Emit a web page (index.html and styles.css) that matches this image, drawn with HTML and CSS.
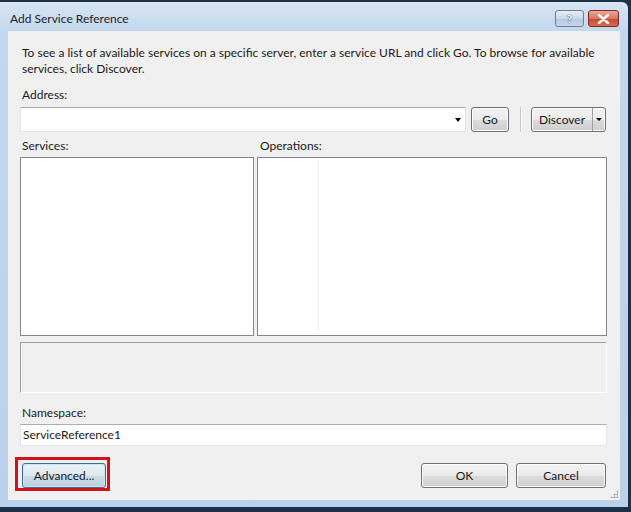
FILE: index.html
```html
<!DOCTYPE html>
<html lang="en">
<head>
  <meta charset="UTF-8">
  <title>Add Service Reference</title>
  <link rel="stylesheet" href="styles.css">
</head>
<body>
  <div class="window">
    <div class="titlebar">
      <span class="title">Add Service Reference</span>
      <div class="caption-buttons">
        <span class="cap-btn help">?</span>
        <span class="cap-btn close">
          <svg width="13" height="10" viewBox="0 0 13 10"><path d="M2 1 L11 9 M11 1 L2 9" stroke="#fff" stroke-width="2.4" stroke-linecap="round"/></svg>
        </span>
      </div>
    </div>

    <div class="client">
      <p class="intro">To see a list of available services on a specific server, enter a service URL and click Go. To browse for available services, click Discover.</p>

      <div class="label">Address:</div>
      <div class="address-row">
        <div class="combo"><span class="combo-arrow"></span></div>
        <button class="btn go">Go</button>
        <span class="separator"></span>
        <div class="split">
          <span class="split-main">Discover</span>
          <span class="split-arrow"></span>
        </div>
      </div>

      <div class="lists-labels">
        <div class="label">Services:</div>
        <div class="label ops-label">Operations:</div>
      </div>
      <div class="lists">
        <div class="listbox"></div>
        <div class="listbox operations"><div class="ops-col"></div></div>
      </div>

      <div class="details"></div>

      <div class="label namespace-label">Namespace:</div>
      <div class="textbox">ServiceReference1</div>

      <div class="button-row">
        <div class="highlight"><button class="btn advanced">Advanced...</button></div>
        <button class="btn ok">OK</button>
        <button class="btn cancel">Cancel</button>
      </div>

      <span class="grip"></span>
    </div>
  </div>
</body>
</html>
```

FILE: styles.css
```css
body { margin: 0; background: #1d3047; font-family: Lato, "Liberation Sans", sans-serif; font-size: 12px; color: #1a1a1a; }

.window { width: 628px; height: 505px; margin-top: 2px; display: flex; flex-direction: column; background: linear-gradient(#d7e5f4, #c3d8ee 30px, #b9d1ea); border-radius: 0 6px 0 0; }

.titlebar { height: 29px; display: flex; align-items: flex-start; padding: 0 9px 0 10px; }
.title { margin-top: 9px; line-height: 16px; color: #1e1e1e; }
.caption-buttons { margin-left: auto; margin-top: 8px; display: flex; gap: 4px; }
.cap-btn { height: 15px; border: 1px solid #6d7f96; border-radius: 3px; display: flex; align-items: center; justify-content: center; }
.help { width: 27px; background: linear-gradient(#e6eef8, #c9d8ea 50%, #b4c8e0 51%, #c7d8ec); color: #fff; font-weight: bold; text-shadow: 0 0 1px #2d4a6e, 0 0 1px #2d4a6e; }
.close { width: 29px; border-color: #7a2a22; background: linear-gradient(#e9a99c, #d7755f 50%, #c44a30 51%, #d86c4f); }

.client { flex: 1; margin: 0 8px 7px 8px; padding: 14px 13px 12px 12px; background: #f0f0f0; position: relative; }

.intro { margin: 0 0 0 2px; line-height: 16px; }
.label { line-height: 16px; padding-left: 2px; }
.intro + .label { margin-top: 10px; }

.address-row { margin-top: 4px; height: 25px; display: flex; align-items: stretch; }
.combo { flex: 1; margin-right: 5px; background: #fff; border: 1px solid #e2e3ea; border-top-color: #abadb3; border-bottom-color: #e3e9ef; position: relative; }
.combo-arrow { position: absolute; right: 4px; top: 10px; border: 3.5px solid transparent; border-top: 4px solid #000; border-bottom: 0; }

.btn { font: inherit; color: #1a1a1a; padding: 0; border: 1px solid #707070; border-radius: 3px; box-shadow: inset 0 0 0 1px #fcfcfc; background: linear-gradient(#f2f2f2, #ebebeb 50%, #dddddd 51%, #cfcfcf); }
.go { width: 38px; height: 25px; }
.separator { width: 1px; margin: 0 9px 0 11px; background: #c8c8c8; border-right: 1px solid #fff; }
.split { width: 73px; margin-right: 1px; display: flex; border: 1px solid #707070; border-radius: 3px; box-shadow: inset 0 0 0 1px #fcfcfc; background: linear-gradient(#f2f2f2, #ebebeb 50%, #dddddd 51%, #cfcfcf); }
.split-main { flex: 1; display: flex; align-items: center; justify-content: center; }
.split-arrow { width: 12px; border-left: 1px solid #a0a0a0; position: relative; }
.split-arrow::after { content: ""; position: absolute; left: 3px; top: 10px; border: 3px solid transparent; border-top: 3px solid #000; border-bottom: 0; }

.lists-labels { margin-top: 6px; display: grid; grid-template-columns: 234px 1fr; gap: 3px; }
.ops-label { padding-left: 3px; }
.lists { margin-top: 3px; height: 179px; display: grid; grid-template-columns: 234px 1fr; gap: 3px; }
.listbox { background: #fff; border: 1px solid #828790; }
.operations { display: flex; padding: 2px 0; }
.ops-col { width: 60px; border-right: 1px solid #f0f0f0; }

.details { margin-top: 6px; height: 49px; border: 1px solid #a0a0a0; border-right-color: #fff; border-bottom-color: #fff; background: #f0f0f0; }

.namespace-label { margin-top: 12px; }
.textbox { margin-top: 3px; height: 20px; line-height: 20px; padding-left: 2px; background: #fff; border: 1px solid #e2e3ea; border-top-color: #abadb3; border-bottom-color: #e3e9ef; }

.button-row { margin-top: 17px; height: 25px; display: flex; gap: 8px; }
.highlight { margin-left: 2px; margin-right: auto; position: relative; }
.highlight::after { content: ""; position: absolute; left: -7px; top: -6px; right: -4px; bottom: -3px; border: 3px solid #d0121c; }
.advanced { width: 84px; height: 25px; border-color: #3c6f96; box-shadow: inset 0 0 0 1px #cfe6f2; background: linear-gradient(#eaf3f8, #dde9f0 50%, #cadce7 51%, #bcd2e0); }
.ok { width: 87px; height: 25px; }
.cancel { width: 90px; height: 25px; margin-right: 1px; }

.grip { position: absolute; right: 2px; bottom: 2px; width: 8px; height: 8px; background: radial-gradient(circle, #b0b0b0 1px, transparent 1.2px) 0 0 / 3px 3px; clip-path: polygon(100% 0, 100% 100%, 0 100%); }
```
